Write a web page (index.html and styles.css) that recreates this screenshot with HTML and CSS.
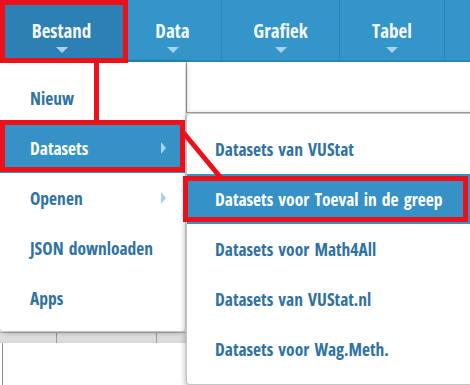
FILE: index.html
```html
<!DOCTYPE html>
<html lang="nl">
<head>
    <meta charset="UTF-8">
    <title>VUStat</title>
    <link rel="stylesheet" href="styles.css">
</head>
<body>
    <div class="page">
        <nav class="navbar">
            <div class="nav-item nav-bestand active"><span>Bestand</span><i class="caret"></i></div>
            <div class="nav-item nav-data"><span>Data</span><i class="caret"></i></div>
            <div class="nav-item nav-grafiek"><span>Grafiek</span><i class="caret"></i></div>
            <div class="nav-item nav-tabel"><span>Tabel</span><i class="caret"></i></div>
            <div class="nav-item nav-rest"></div>
        </nav>

        <div class="toolbar"></div>
        <div class="grid">
            <div class="grid-head">
                <span class="col col-a"></span>
                <span class="col col-b"></span>
                <span class="col col-c"></span>
            </div>
            <div class="grid-body"></div>
        </div>

        <ul class="menu">
            <li class="menu-item">Nieuw</li>
            <li class="menu-item sub selected">Datasets</li>
            <li class="menu-item sub">Openen</li>
            <li class="menu-item">JSON downloaden</li>
            <li class="menu-item">Apps</li>
        </ul>

        <ul class="menu submenu">
            <li class="menu-item">Datasets van VUStat</li>
            <li class="menu-item selected">Datasets voor Toeval in de greep</li>
            <li class="menu-item">Datasets voor Math4All</li>
            <li class="menu-item">Datasets van VUStat.nl</li>
            <li class="menu-item">Datasets voor Wag.Meth.</li>
        </ul>

        <!-- red markings on top of the screenshot -->
        <svg class="marks" width="470" height="385" viewBox="0 0 470 385">
            <rect x="2.5" y="2.5" width="123" height="58"/>
            <line x1="96.5" y1="62" x2="96.5" y2="121"/>
            <rect x="2.5" y="122.5" width="180" height="47"/>
            <line x1="182" y1="131" x2="221" y2="178"/>
            <rect x="185.5" y="178.5" width="280" height="41"/>
        </svg>
    </div>
</body>
</html>
```

FILE: styles.css
```css
* { box-sizing: border-box; margin: 0; padding: 0; }
body {
    font-family: "Open Sans", "Noto Sans", Roboto, sans-serif;
    font-stretch: 75%; font-variation-settings: "wdth" 75; font-weight: bold;
    background-color: #ffffff; white-space: nowrap;
}
.page { position: relative; width: 470px; height: 385px; overflow: hidden; }

.navbar { display: flex; height: 62px; background-color: #3395c8; border-bottom: 2px solid #2b86b6; }
.nav-item {
    display: flex; flex-direction: column; align-items: center; padding-top: 20px;
    border-right: 1px solid #2c87b8; color: #f4f9fc; font-size: 19px; line-height: 22px;
}
.nav-item.active { background-color: #2c80b3; }
.nav-bestand { width: 124px; }
.nav-data { width: 98px; }
.nav-grafiek { width: 118px; }
.nav-tabel { width: 105px; }
.nav-rest { flex: 1; border-right: none; }
.caret {
    display: block; width: 0; height: 0; margin-top: 5px;
    border-left: 6px solid transparent; border-right: 6px solid transparent; border-top: 6px solid #a6d3ef;
}

.toolbar { height: 51px; margin-left: 186px; border-left: 1px solid #9a9a9a; border-bottom: 1px solid #a8a8a8; }
.grid { margin-top: 219px; }
.grid-head {
    display: flex; height: 11px; background-image: linear-gradient(#ececec, #d6d6d6);
    border-top: 1px solid #bdbdbd;
}
.col { border-right: 1px solid #9c9c9c; }
.col-a { width: 57px; }
.col-b { width: 100px; }
.col-c { width: 100px; }
.grid-body { height: 60px; margin-left: 2px; border-left: 1px solid #8f8f8f; }

.menu {
    position: absolute; top: 62px; left: 0; width: 185px; list-style: none;
    padding: 11px 0 8px; background-color: #ffffff;
    border-radius: 0 0 4px 4px; box-shadow: 0 2px 6px rgba(0, 0, 0, 0.35);
}
.menu-item {
    display: flex; align-items: center; height: 50px; padding-left: 30px; padding-right: 19px;
    color: #2f72a3; font-size: 17.5px; word-spacing: 2px;
    font-stretch: 79%; font-variation-settings: "wdth" 79;
}
.menu-item.sub::after {
    content: ""; margin-left: auto; width: 0; height: 0;
    border-top: 6px solid transparent; border-bottom: 6px solid transparent; border-left: 5px solid #a9d0ea;
}
.menu-item.selected { background-color: #3591c6; color: #ffffff; }
.menu-item.selected.sub::after { border-left-color: #a6d3ef; }

.submenu {
    top: 113px; left: 186px; width: 300px; height: 272px; padding: 10px 0;
    border: 1px solid #c4c4c4; border-radius: 4px 0 0 4px;
}
.submenu .menu-item { padding-left: 28px; }

.marks { position: absolute; top: 0; left: 0; pointer-events: none; }
.marks rect, .marks line { fill: none; stroke: #ec1118; stroke-width: 5; }
```
